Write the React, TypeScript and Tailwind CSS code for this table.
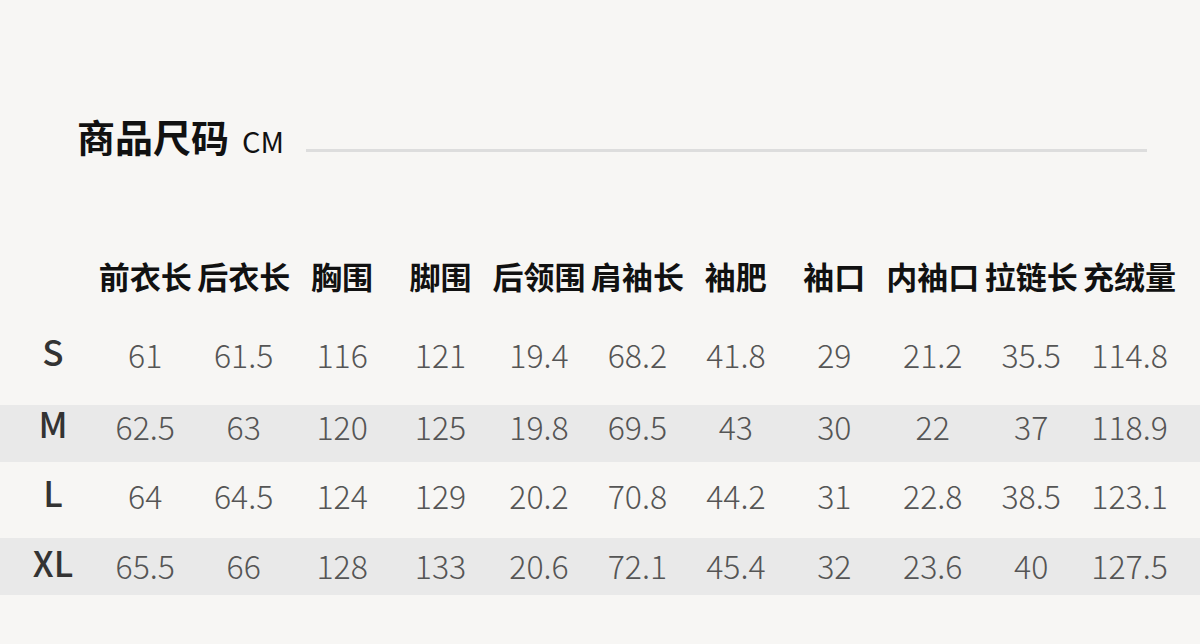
const headers = ["前衣长", "后衣长", "胸围", "脚围", "后领围", "肩袖长", "袖肥", "袖口", "内袖口", "拉链长", "充绒量"];

const rows = [
  { size: "S", values: ["61", "61.5", "116", "121", "19.4", "68.2", "41.8", "29", "21.2", "35.5", "114.8"], cls: "h-[76px] pb-[26px]" },
  { size: "M", values: ["62.5", "63", "120", "125", "19.8", "69.5", "43", "30", "22", "37", "118.9"], cls: "h-[57px] pb-[17px] bg-[#e9e9e9]" },
  { size: "L", values: ["64", "64.5", "124", "129", "20.2", "70.8", "44.2", "31", "22.8", "38.5", "123.1"], cls: "h-[76px] pb-[10px]" },
  { size: "XL", values: ["65.5", "66", "128", "133", "20.6", "72.1", "45.4", "32", "23.6", "40", "127.5"], cls: "h-[57px] pb-[3px] bg-[#e9e9e9]" },
];

const grid = "grid grid-cols-[96px_repeat(11,98.45px)] items-center";

export default function App() {
  return (
    <div className="w-[1200px] h-[644px] bg-[#f7f6f4] overflow-hidden font-['Noto_Sans_CJK_SC','Noto_Sans',sans-serif]">
      {/* title */}
      <div className="flex items-end pl-[77px] pr-[53px] pt-[119px] h-[162px]">
        <span className="text-[38px] leading-none font-bold text-[#111] pb-[7px]">商品尺码</span>
        <span className="ml-[13px] text-[29px] leading-none text-[#111] pb-[7px]">CM</span>
        <div className="flex-1 ml-[22px] h-[3px] bg-[#dddddd] mb-[10px]" />
      </div>

      {/* header */}
      <div className={`${grid} mt-[97px] h-[32px]`}>
        <div />
        {headers.map((h) => (
          <div key={h} className="text-center text-[31px] leading-none font-bold text-[#111] whitespace-nowrap">
            {h}
          </div>
        ))}
      </div>

      {/* body */}
      <div className="mt-[38px]">
        {rows.map((r) => (
          <div key={r.size} className={`${grid} ${r.cls}`}>
            <div className="pl-[10px] pb-[7px] text-center text-[35px] leading-none font-medium text-[#333]">{r.size}</div>
            {r.values.map((v, i) => (
              <div key={i} className="text-center text-[32px] leading-none font-light text-[#555]">
                {v}
              </div>
            ))}
          </div>
        ))}
      </div>
    </div>
  );
}
